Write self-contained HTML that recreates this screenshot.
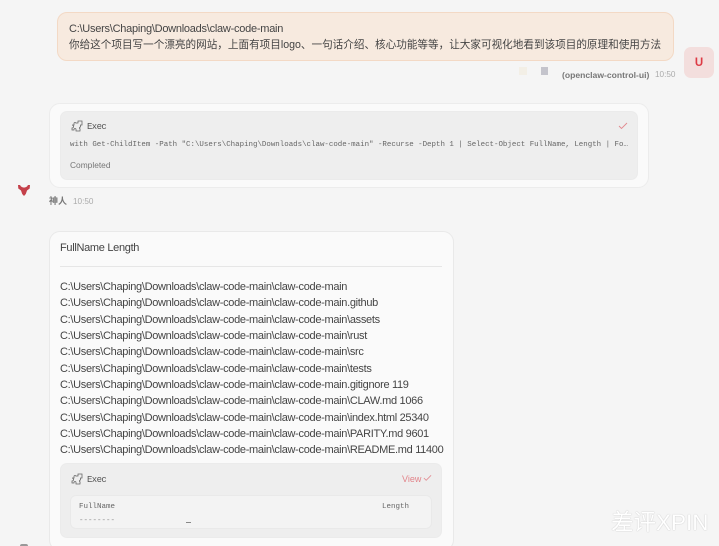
<!DOCTYPE html>
<html lang="zh">
<head>
<meta charset="utf-8">
<style>
html,body{margin:0;padding:0;width:719px;height:546px;overflow:hidden;background:#f5f5f5}
body{position:relative;font-family:"Liberation Sans","Noto Sans CJK SC",sans-serif;color:#444}
.a{position:absolute;box-sizing:border-box}
.t{position:absolute;white-space:nowrap;line-height:16px}
.m{font-family:"Liberation Mono","DejaVu Sans Mono",monospace;color:#666}
.l{left:60px;font-size:11px;letter-spacing:-.31px;color:#444}
#w{position:absolute;inset:0;filter:blur(.3px)}
</style>
</head>
<body>
<div id="w">
<!-- user bubble -->
<div class="a" style="left:57px;top:12px;width:617px;height:49px;background:#f7eadf;border:1px solid #f3d9c5;border-radius:10px"></div>
<div class="t" style="left:69px;top:21px;font-size:11px;letter-spacing:-.25px">C:\Users\Chaping\Downloads\claw-code-main</div>
<div class="t" style="left:69px;top:37px;font-size:10.6px">你给这个项目写一个漂亮的网站，上面有项目logo、一句话介绍、核心功能等等，让大家可视化地看到该项目的原理和使用方法</div>
<div class="a" style="left:519px;top:67px;width:8px;height:8px;background:#f3efe6"></div>
<div class="a" style="left:541px;top:67px;width:7px;height:8px;background:#c4c4cc"></div>
<div class="t" style="left:562px;top:67px;font-size:8.6px;font-weight:700;color:#777">(openclaw-control-ui)</div>
<div class="t" style="left:655px;top:67px;font-size:8.2px;color:#ababab">10:50</div>
<div class="a" style="left:684px;top:47px;width:30px;height:31px;background:#f3dedd;border-radius:7px"></div>
<div class="t" style="left:684px;top:55px;width:30px;text-align:center;font-size:11.5px;font-weight:700;color:#dd3a45">U</div>

<!-- exec card 1 -->
<div class="a" style="left:49px;top:103px;width:600px;height:85px;background:#fafafa;border:1px solid #ececec;border-radius:11px"></div>
<div class="a" style="left:60px;top:111px;width:578px;height:69px;background:#eeeeee;border-radius:7px;border:1px solid #ebebeb"></div>
<svg class="a" style="left:71px;top:120px" width="12" height="12" viewBox="0 0 12 12" fill="none" stroke="#666" stroke-width=".8"><path d="M1 5h2V3.500a1 1 0 0 1 2 0V3h2V1h4v4H9.500v2a1 1 0 0 0 0 2H9v2H5V9.500a1 1 0 0 0-2 0V10H1V8a1 1 0 0 0 0-3z"/></svg>
<div class="t m" style="left:87px;top:119px;font-size:9px;letter-spacing:-.6px;color:#555">Exec</div>
<svg class="a" style="left:618px;top:122px" width="10" height="8" viewBox="0 0 10 8" fill="none" stroke="#e28a90" stroke-width=".9"><path d="M1 4l2.500 2.500L9 1"/></svg>
<div class="t m" style="left:70px;top:137px;font-size:7.45px">with Get-ChildItem -Path "C:\Users\Chaping\Downloads\claw-code-main" -Recurse -Depth 1 | Select-Object FullName, Length | Fo…</div>
<div class="t" style="left:70px;top:157px;font-size:8.4px;color:#777">Completed</div>

<!-- lobster avatar -->
<svg class="a" style="left:17px;top:183px" width="14" height="14" viewBox="0 0 14 14" fill="#c4404a"><path d="M1 2h2l1 1.500 2 1h2l2-1L11 2h2l-.3 3.500L10 7.500 8.800 11 7 13 5.200 11 4 7.500 1.300 5.500z"/></svg>
<div class="t" style="left:49px;top:193px;font-size:9px;font-weight:700;color:#777">神人</div>
<div class="t" style="left:73px;top:194px;font-size:8.2px;color:#ababab">10:50</div>

<!-- card 2 -->
<div class="a" style="left:49px;top:231px;width:405px;height:320px;background:#fafafa;border:1px solid #e9e9e9;border-radius:11px"></div>
<div class="t l" style="top:240px">FullName Length</div>
<div class="a" style="left:60px;top:266px;width:382px;height:1px;background:#e6e6e6"></div>
<div class="t l" style="top:279px">C:\Users\Chaping\Downloads\claw-code-main\claw-code-main</div>
<div class="t l" style="top:295px">C:\Users\Chaping\Downloads\claw-code-main\claw-code-main.github</div>
<div class="t l" style="top:312px">C:\Users\Chaping\Downloads\claw-code-main\claw-code-main\assets</div>
<div class="t l" style="top:328px">C:\Users\Chaping\Downloads\claw-code-main\claw-code-main\rust</div>
<div class="t l" style="top:344px">C:\Users\Chaping\Downloads\claw-code-main\claw-code-main\src</div>
<div class="t l" style="top:361px">C:\Users\Chaping\Downloads\claw-code-main\claw-code-main\tests</div>
<div class="t l" style="top:377px">C:\Users\Chaping\Downloads\claw-code-main\claw-code-main.gitignore 119</div>
<div class="t l" style="top:393px">C:\Users\Chaping\Downloads\claw-code-main\claw-code-main\CLAW.md 1066</div>
<div class="t l" style="top:410px">C:\Users\Chaping\Downloads\claw-code-main\claw-code-main\index.html 25340</div>
<div class="t l" style="top:426px">C:\Users\Chaping\Downloads\claw-code-main\claw-code-main\PARITY.md 9601</div>
<div class="t l" style="top:442px">C:\Users\Chaping\Downloads\claw-code-main\claw-code-main\README.md 11400</div>

<div class="a" style="left:60px;top:463px;width:382px;height:75px;background:#eeeeee;border:1px solid #ebebeb;border-radius:7px"></div>
<svg class="a" style="left:71px;top:473px" width="12" height="12" viewBox="0 0 12 12" fill="none" stroke="#666" stroke-width=".8"><path d="M1 5h2V3.500a1 1 0 0 1 2 0V3h2V1h4v4H9.500v2a1 1 0 0 0 0 2H9v2H5V9.500a1 1 0 0 0-2 0V10H1V8a1 1 0 0 0 0-3z"/></svg>
<div class="t m" style="left:87px;top:472px;font-size:9px;letter-spacing:-.6px;color:#555">Exec</div>
<div class="t" style="left:402px;top:471px;font-size:9px;color:#e2848a">View</div>
<svg class="a" style="left:423px;top:474px" width="9" height="8" viewBox="0 0 10 8" fill="none" stroke="#e28a90" stroke-width=".9"><path d="M1 4l2.500 2.500L9 1"/></svg>
<div class="a" style="left:70px;top:495px;width:362px;height:34px;background:#f3f3f3;border:1px solid #e9e9e9;border-radius:6px"></div>
<div class="t m" style="left:79px;top:499px;font-size:7.5px">FullName</div>
<div class="t m" style="left:382px;top:499px;font-size:7.5px">Length</div>
<div class="t m" style="left:79px;top:513px;font-size:7.5px;color:#888">--------</div>
<div class="a" style="left:186px;top:522px;width:5px;height:1px;background:#888"></div>
<div class="a" style="left:20px;top:544px;width:8px;height:2px;background:#999;border-radius:3px 3px 0 0"></div>

<!-- watermark -->
<div class="t" style="left:611px;top:511px;font-size:22.5px;line-height:24px;color:#fff;text-shadow:0 0 1px #aaa">差评XPIN</div>
</div>
</body>
</html>
